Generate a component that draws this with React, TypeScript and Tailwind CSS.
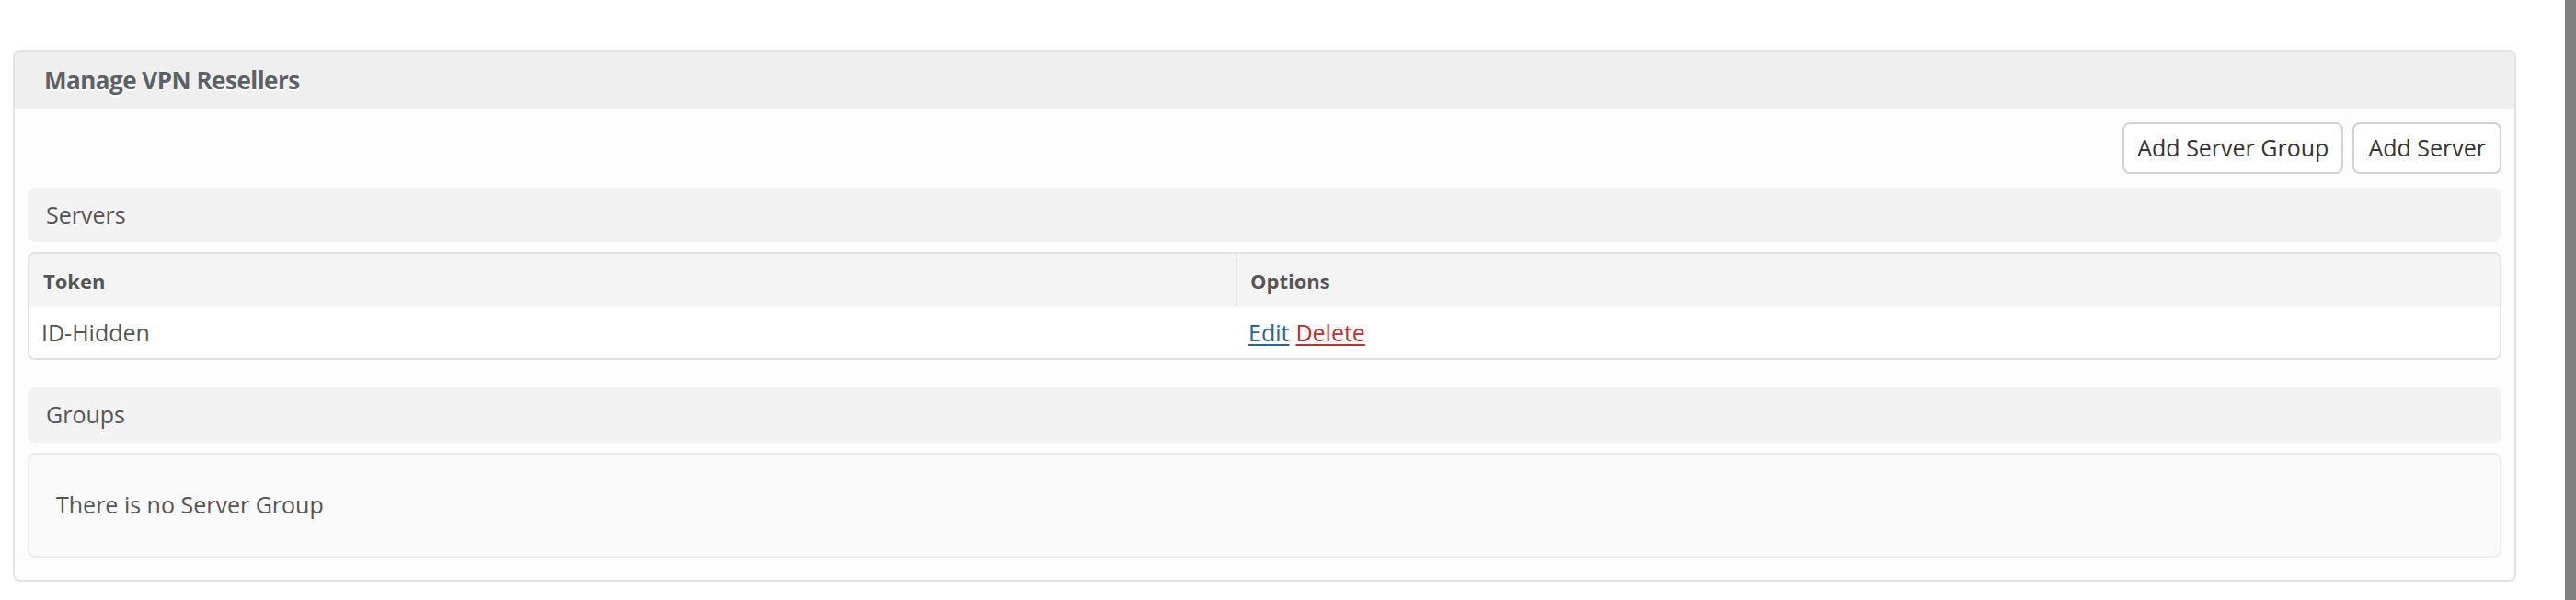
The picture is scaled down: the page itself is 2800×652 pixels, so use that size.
export default function App() {
    return (
        <div className="flex h-[652px] w-full bg-white font-['Open_Sans',sans-serif] text-[25px] text-[#555]">
            <main className="flex-1 pl-[14px] pr-[53px] pt-[54px]">
                <section className="overflow-hidden rounded-[8px] border-2 border-[#e2e2e2] bg-[#fdfdfd]">
                    <div className="flex h-[62px] items-center bg-[#efefef] pl-[32px]">
                        <h1 className="text-[26px] font-bold tracking-[-0.5px] text-[#5b6169] [text-shadow:0_2px_0_#fff]">
                            Manage VPN Resellers
                        </h1>
                    </div>

                    <div className="px-[14px] pb-[24px] pt-[15px]">
                        <div className="flex justify-end gap-[10px]">
                            <button className="h-[56px] rounded-[8px] border-2 border-[#d2d2d2] bg-white px-[14px] text-[25px] text-[#333]">
                                Add Server Group
                            </button>
                            <button className="h-[56px] rounded-[8px] border-2 border-[#d2d2d2] bg-white px-[15px] text-[25px] text-[#333]">
                                Add Server
                            </button>
                        </div>

                        <div className="mt-[15px] flex h-[59px] items-center rounded-[8px] bg-[#f3f3f3] pl-[20px]">
                            Servers
                        </div>

                        <div className="mt-[11px] overflow-hidden rounded-[8px] border-2 border-[#e2e2e2]">
                            <div className="grid grid-cols-[1311px_1fr] bg-[#f4f4f4] text-[22px] font-bold [text-shadow:0_1px_0_#fff]">
                                <div className="flex h-[58px] items-center pl-[15px]">Token</div>
                                <div className="flex h-[58px] items-center border-l-2 border-[#e2e2e2] pl-[14px]">
                                    Options
                                </div>
                            </div>
                            <div className="grid grid-cols-[1311px_1fr] bg-white">
                                <div className="flex h-[55px] items-center pl-[13px]">ID-Hidden</div>
                                <div className="flex h-[55px] items-center gap-[7px] pl-[14px]">
                                    <a href="#" className="text-[#2a6496] underline underline-offset-[3px]">
                                        Edit
                                    </a>
                                    <a href="#" className="text-[#c0302b] underline underline-offset-[3px]">
                                        Delete
                                    </a>
                                </div>
                            </div>
                        </div>

                        <div className="mt-[30px] flex h-[60px] items-center rounded-[8px] bg-[#f3f3f3] pl-[20px]">
                            Groups
                        </div>

                        <div className="mt-[11px] flex h-[114px] items-center rounded-[8px] border-2 border-[#ececec] bg-[#f9f9f9] pl-[29px]">
                            There is no Server Group
                        </div>
                    </div>
                </section>
            </main>
            <div className="w-[12px] bg-[#808080]" />
        </div>
    );
}
